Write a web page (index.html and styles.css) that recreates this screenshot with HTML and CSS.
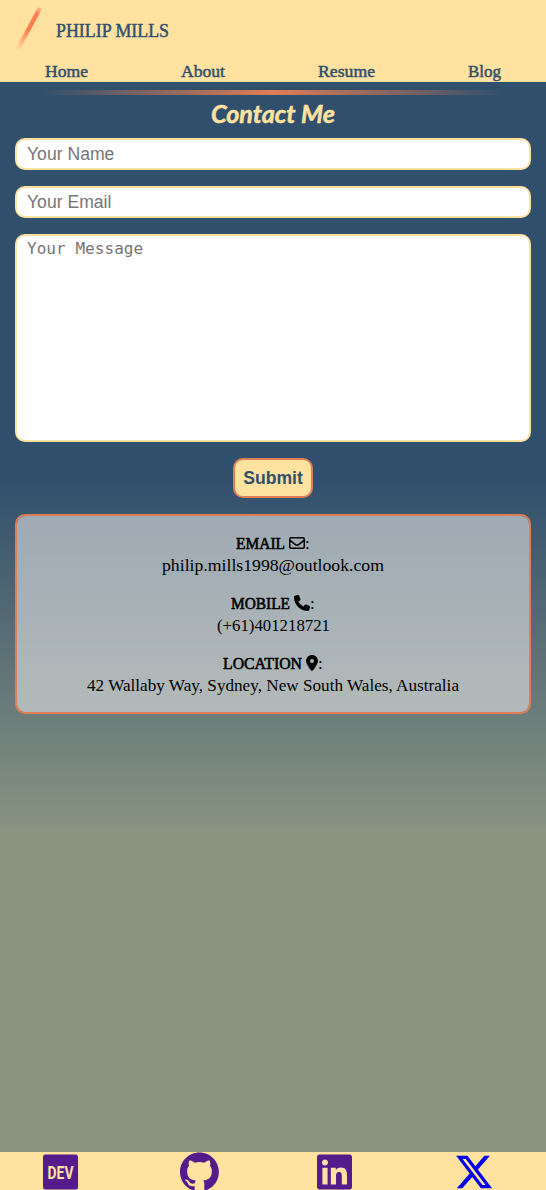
FILE: index.html
```html
<!DOCTYPE html>
<html lang="en">
<head>
<meta charset="utf-8">
<title>Contact Me</title>
<link rel="stylesheet" href="styles.css">
</head>
<body>
<header class="header">
  <div class="brand">
    <svg class="slash" viewBox="0 0 40 60">
      <defs><linearGradient id="fade" gradientUnits="userSpaceOnUse" x1="38" y1="9" x2="17" y2="50"><stop offset="0" stop-color="#ff7f50" stop-opacity=".55"/><stop offset=".12" stop-color="#ff7f50"/><stop offset=".5" stop-color="#ff7f50"/><stop offset="1" stop-color="#ff7f50" stop-opacity="0"/></linearGradient></defs>
      <path d="M39 9.8 18 49" stroke="url(#fade)" stroke-width="4.4" stroke-linecap="round"/>
    </svg>
    <svg class="name" width="116" height="28"><text x="0" y="20" textLength="113" lengthAdjust="spacingAndGlyphs">PHILIP MILLS</text></svg>
  </div>
  <nav class="nav">
    <a><svg width="43" height="22"><text x="0" y="16" textLength="43" lengthAdjust="spacingAndGlyphs">Home</text></svg></a>
    <a><svg width="44" height="22"><text x="0" y="16" textLength="44" lengthAdjust="spacingAndGlyphs">About</text></svg></a>
    <a><svg width="57" height="22"><text x="0" y="16" textLength="57" lengthAdjust="spacingAndGlyphs">Resume</text></svg></a>
    <a><svg width="33" height="22"><text x="0" y="16" textLength="33" lengthAdjust="spacingAndGlyphs">Blog</text></svg></a>
  </nav>
</header>
<main class="main">
  <div class="rule"></div>
  <h1 class="title"><svg width="128" height="36"><text x="2" y="26" textLength="124" lengthAdjust="spacingAndGlyphs">Contact Me</text></svg></h1>
  <form class="form">
    <input class="field" type="text" placeholder="Your Name">
    <input class="field" type="email" placeholder="Your Email">
    <textarea class="field message" placeholder="Your Message"></textarea>
    <button class="submit" type="button">Submit</button>
  </form>
  <section class="details">
    <div class="detail">
      <div class="label"><svg class="word" width="49" height="22"><text x="0" y="17" textLength="49" lengthAdjust="spacingAndGlyphs">EMAIL</text></svg><svg class="icon" viewBox="0 0 512 512"><path d="M64 112c-8.8 0-16 7.2-16 16v22.1L220.5 291.7c20.7 17 50.4 17 71.1 0L464 150.1V128c0-8.8-7.2-16-16-16H64zM48 212.2V384c0 8.8 7.2 16 16 16H448c8.8 0 16-7.2 16-16V212.2L322 328.8c-38.4 31.5-93.7 31.5-132 0L48 212.2zM0 128C0 92.7 28.7 64 64 64H448c35.3 0 64 28.7 64 64V384c0 35.3-28.7 64-64 64H64c-35.3 0-64-28.7-64-64V128z"/></svg><span class="colon">:</span></div>
      <svg class="value" width="222" height="22"><text x="0" y="17" textLength="222" lengthAdjust="spacingAndGlyphs">philip.mills1998@outlook.com</text></svg>
    </div>
    <div class="detail">
      <div class="label"><svg class="word" width="59" height="22"><text x="0" y="17" textLength="59" lengthAdjust="spacingAndGlyphs">MOBILE</text></svg><svg class="icon" viewBox="0 0 512 512"><path d="M164.9 24.6c-7.7-18.6-28-28.5-47.4-23.2l-88 24C12.1 30.2 0 46 0 64C0 311.4 200.6 512 448 512c18 0 33.8-12.1 38.6-29.5l24-88c5.3-19.4-4.6-39.7-23.2-47.4l-96-40c-16.3-6.8-35.2-2.1-46.3 11.6L304.7 368C234.3 334.7 177.3 277.7 144 207.3L193.3 167c13.7-11.2 18.4-30 11.6-46.3l-40-96z"/></svg><span class="colon">:</span></div>
      <svg class="value" width="113" height="22"><text x="0" y="17" textLength="113" lengthAdjust="spacingAndGlyphs">(+61)401218721</text></svg>
    </div>
    <div class="detail">
      <div class="label"><svg class="word" width="79" height="22"><text x="0" y="17" textLength="79" lengthAdjust="spacingAndGlyphs">LOCATION</text></svg><svg class="icon pin" viewBox="0 0 384 512"><path d="M215.7 499.2C267 435 384 279.4 384 192C384 86 298 0 192 0S0 86 0 192c0 87.4 117 243 168.3 307.2c12.3 15.3 35.1 15.3 47.4 0zM192 128a64 64 0 1 1 0 128 64 64 0 1 1 0-128z"/></svg><span class="colon">:</span></div>
      <svg class="value" width="372" height="22"><text x="0" y="17" textLength="372" lengthAdjust="spacingAndGlyphs">42 Wallaby Way, Sydney, New South Wales, Australia</text></svg>
    </div>
  </section>
</main>
<footer class="footer">
  <svg class="social" width="35" height="40" viewBox="0 0 35 40"><rect y="2.5" width="35" height="35" rx="2.5"/><text class="dev" x="4.5" y="26.5" textLength="26" lengthAdjust="spacingAndGlyphs">DEV</text></svg>
  <svg class="social" width="39" height="40" viewBox="0 0 39 40"><path transform="translate(0 .6) scale(2.43)" d="M8 0C3.58 0 0 3.58 0 8c0 3.54 2.29 6.53 5.47 7.59.4.07.55-.17.55-.38 0-.19-.01-.82-.01-1.49-2.01.37-2.53-.49-2.69-.94-.09-.23-.48-.94-.82-1.13-.28-.15-.68-.52-.01-.53.63-.01 1.08.58 1.23.82.72 1.21 1.87.87 2.33.66.07-.52.28-.87.51-1.07-1.78-.2-3.64-.89-3.64-3.95 0-.87.31-1.59.82-2.15-.08-.2-.36-1.02.08-2.12 0 0 .67-.21 2.2.82.64-.18 1.32-.27 2-.27s1.36.09 2 .27c1.53-1.04 2.2-.82 2.2-.82.44 1.1.16 1.92.08 2.12.51.56.82 1.27.82 2.15 0 3.07-1.87 3.75-3.65 3.95.29.25.54.73.54 1.48 0 1.07-.01 1.93-.01 2.2 0 .21.15.46.55.38A8.01 8.01 0 0 0 16 8c0-4.42-3.58-8-8-8z"/></svg>
  <svg class="social" width="35" height="40" viewBox="0 0 448 512"><path d="M416 32H31.9C14.3 32 0 46.5 0 64.3v383.4C0 465.5 14.3 480 31.9 480H416c17.6 0 32-14.5 32-32.3V64.3c0-17.8-14.4-32.3-32-32.3zM135.4 416H69V202.2h66.5V416zm-33.2-243c-21.3 0-38.5-17.3-38.5-38.5S80.9 96 102.2 96c21.2 0 38.5 17.3 38.5 38.5 0 21.3-17.2 38.5-38.5 38.5zm282.1 243h-66.4V312c0-24.8-.5-56.7-34.5-56.7-34.6 0-39.9 27-39.9 54.9V416h-66.4V202.2h63.7v29.2h.9c8.9-16.8 30.6-34.5 62.9-34.5 67.2 0 79.7 44.3 79.7 101.9V416z"/></svg>
  <svg class="social x" width="40" height="40" viewBox="0 0 512 512"><path d="M389.2 48h70.6L305.6 224.2 487 464H345L233.7 318.6 106.5 464H35.8L200.7 275.5 26.8 48H172.4L272.9 180.9 389.2 48zM364.4 421.8h39.1L151.1 88h-42L364.4 421.8z"/></svg>
</footer>
</body>
</html>
```
FILE: styles.css
```css
* { box-sizing: border-box; }
body {
  margin: 0;
  height: 1190px;
  overflow: hidden;
  display: flex;
  flex-direction: column;
  font-family: "Liberation Serif", serif;
  background: linear-gradient(#304f6d 40%, #899481 70%);
}
svg { display: block; flex: none; overflow: visible; }
.header { height: 82px; background: #ffe1a0; color: #304f6d; flex: none; }
.brand { display: flex; height: 61px; }
.slash { width: 40px; height: 60px; fill: none; }
.name { margin: 17px 0 0 16px; fill: #304f6d; stroke: #304f6d; stroke-width: .5px; font-size: 19.5px; }
.nav { display: flex; justify-content: space-between; padding: 0 45px; fill: #304f6d; stroke: #304f6d; stroke-width: .5px; font-size: 17.5px; }
.main { flex: 1; padding: 8px 15px 0; }
.rule { height: 5px; margin: 0 26px; background: linear-gradient(90deg, transparent, #e07d54, transparent); }
.title { margin: 2px 0 0; height: 41px; display: flex; justify-content: center; fill: #ffe1a0; stroke: #ffe1a0; stroke-width: .5px; font: italic 700 24.5px Lato, sans-serif; }
.form { display: flex; flex-direction: column; gap: 16px; }
.field { display: block; width: 100%; height: 32px; margin: 0; padding: 0 10px; border: 2px solid #ffe1a0; border-radius: 10px; background: #fff; font: 17.6px "Liberation Sans", sans-serif; resize: none; outline: none; }
.field::placeholder { color: #757575; }
.message { height: 208px; padding: 2px 10px; font: 16px/22px "DejaVu Sans Mono", monospace; letter-spacing: .05px; }
.submit { align-self: center; width: 80px; height: 40px; padding: 0; border: 2px solid #e07d54; border-radius: 10px; background: #ffe1a0; color: #304f6d; font: bold 17.6px "Liberation Sans", sans-serif; }
.details { height: 200px; margin-top: 16px; padding-top: 16px; border: 2px solid #e07d54; border-radius: 10px; background: rgba(226, 226, 226, .6); background-clip: padding-box; display: flex; flex-direction: column; gap: 16px; font-size: 17px; }
.detail { display: flex; flex-direction: column; align-items: center; }
.label { display: flex; height: 22px; }
.word { margin-right: 4px; stroke: #000; stroke-width: .6px; }
.icon { width: 16px; height: 16px; margin-top: 3px; }
.pin { width: 12px; }
.colon { width: 5px; line-height: 24px; }
.footer { height: 38px; flex: none; background: #ffe1a0; display: grid; grid-template-columns: 137px 137px 137px 40px; padding-left: 43px; overflow: hidden; }
.social { fill: #551a8b; }
.x { fill: #00e; }
.dev { fill: #ffe1a0; font: bold 19px Roboto, sans-serif; }
```
